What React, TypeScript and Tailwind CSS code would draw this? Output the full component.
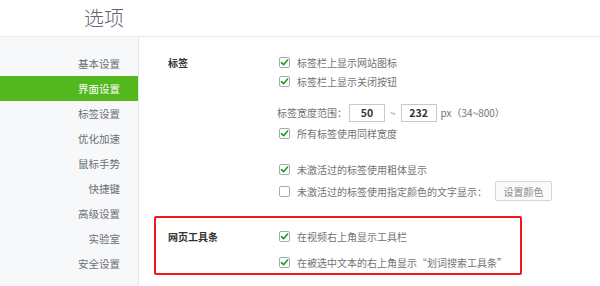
import React from "react";

const font = {
  fontFamily: '"Noto Sans CJK SC", "Liberation Sans", sans-serif',
};

const menu = [
  "基本设置",
  "界面设置",
  "标签设置",
  "优化加速",
  "鼠标手势",
  "快捷键",
  "高级设置",
  "实验室",
  "安全设置",
];

const Check = ({ checked = true }: { checked?: boolean }) => (
  <span className="flex h-[11px] w-[11px] shrink-0 items-center justify-center rounded-[2px] border border-[#a9a9a9] bg-white">
    {checked && (
      <svg width="9" height="9" viewBox="0 0 9 9">
        <path
          d="M1.5 4.6 L3.6 6.7 L7.6 2"
          fill="none"
          stroke="#1d9a1d"
          strokeWidth="1.6"
          strokeLinecap="round"
          strokeLinejoin="round"
        />
      </svg>
    )}
  </span>
);

const Row = ({
  children,
  checked = true,
  className = "",
}: {
  children: React.ReactNode;
  checked?: boolean;
  className?: string;
}) => (
  <div className={`flex h-[19px] items-center gap-[7px] ${className}`}>
    <Check checked={checked} />
    <span className="text-[10px] text-[#737373]">{children}</span>
  </div>
);

export default function App() {
  return (
    <div className="h-[286px] w-[600px] overflow-hidden bg-white" style={font}>
      {/* header */}
      <div className="flex h-[37px] items-center border-b border-[#e8ecee] pl-[84px]">
        <h1 className="text-[20px] font-light leading-none text-[#5d6672]">
          选项
        </h1>
      </div>

      <div className="flex h-[249px]">
        {/* sidebar */}
        <aside className="w-[139px] shrink-0 border-r border-[#e2e6e9] bg-[#f7f8fa] pt-[14px]">
          {menu.map((m, i) => (
            <div
              key={m}
              className={`flex h-[25px] items-center justify-end pr-[18px] text-[10.5px] ${
                i === 1 ? "bg-[#52b81d] text-white" : "text-[#6a6f75]"
              }`}
            >
              {m}
            </div>
          ))}
        </aside>

        {/* content */}
        <main className="flex-1 pl-[15px]">
          <section className="flex pl-[14px] pt-[16px]">
            <div className="flex h-[19px] w-[111px] items-center text-[10px] font-bold text-[#333]">
              标签
            </div>
            <div className="flex flex-col">
              <Row>标签栏上显示网站图标</Row>
              <Row>标签栏上显示关闭按钮</Row>
              <div className="mt-[12px] flex h-[19px] items-center text-[10px] text-[#737373]">
                <span className="-ml-[2px]">标签宽度范围：</span>
                <span className="ml-[2px] flex h-[18px] w-[36px] items-center justify-center border border-[#c9c9c9] text-[10.5px] font-semibold text-[#333]">
                  50
                </span>
                <span className="mx-[5px] text-[#999]">~</span>
                <span className="flex h-[18px] w-[36px] items-center justify-center border border-[#c9c9c9] text-[10.5px] font-semibold text-[#333]">
                  232
                </span>
                <span className="ml-[4px]">px（34~800）</span>
              </div>
              <Row className="mt-[2px]">所有标签使用同样宽度</Row>
              <Row className="mt-[17px]">未激活过的标签使用粗体显示</Row>
              <div className="mt-[2px] flex h-[20px] items-center gap-[7px]">
                <Check checked={false} />
                <span className="text-[10px] text-[#737373]">
                  未激活过的标签使用指定颜色的文字显示：
                </span>
                <button className="ml-[1px] flex h-[20px] w-[57px] items-center justify-center rounded-[2px] border border-[#d6d6d6] bg-[#fafafa] text-[10px] text-[#8a8a8a]">
                  设置颜色
                </button>
              </div>
            </div>
          </section>

          <section className="mt-[15px] flex h-[59px] w-[368px] rounded-[2px] border-2 border-[#f01818] pl-[12px] pt-[9px]">
            <div className="flex h-[19px] w-[111px] items-center text-[10px] font-bold text-[#333]">
              网页工具条
            </div>
            <div className="flex flex-col">
              <Row>在视频右上角显示工具栏</Row>
              <Row className="mt-[7px]">在被选中文本的右上角显示“划词搜索工具条”</Row>
            </div>
          </section>
        </main>
      </div>
    </div>
  );
}
